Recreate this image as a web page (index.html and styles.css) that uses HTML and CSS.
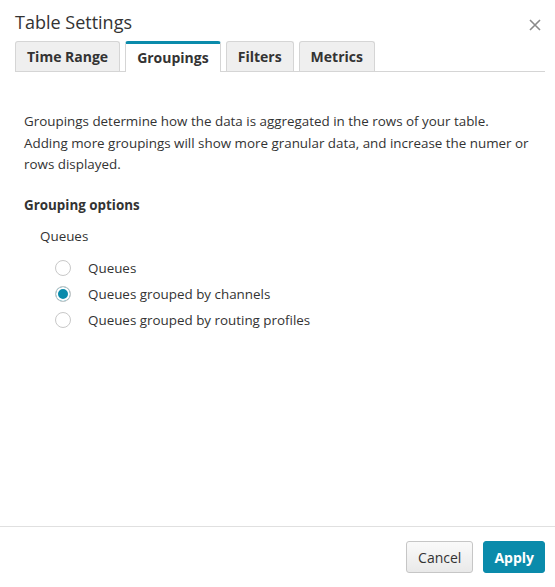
FILE: index.html
```html
<!DOCTYPE html>
<html>
<head>
<meta charset="utf-8">
<link rel="stylesheet" href="styles.css">
</head>
<body>
<div class="modal">
  <div class="header">
    <h1 class="title">Table Settings</h1>
    <button class="close" aria-label="Close">
      <svg width="12" height="12" viewBox="0 0 12 12"><path d="M1 1L11 11M11 1L1 11" stroke="#8a8a8a" stroke-width="1.6" fill="none"/></svg>
    </button>
  </div>
  <div class="tabs">
    <div class="tab">Time Range</div>
    <div class="tab active">Groupings</div>
    <div class="tab">Filters</div>
    <div class="tab">Metrics</div>
  </div>
  <div class="body">
    <p class="desc">Groupings determine how the data is aggregated in the rows of your table. Adding more groupings will show more granular data, and increase the numer or rows displayed.</p>
    <h2 class="section">Grouping options</h2>
    <div class="group-label">Queues</div>
    <div class="options">
      <label class="option"><span class="radio"></span>Queues</label>
      <label class="option"><span class="radio checked"></span>Queues grouped by channels</label>
      <label class="option"><span class="radio"></span>Queues grouped by routing profiles</label>
    </div>
  </div>
  <div class="footer">
    <button class="btn cancel">Cancel</button>
    <button class="btn apply">Apply</button>
  </div>
</div>
</body>
</html>
```

FILE: styles.css
```css
* { box-sizing: border-box; }
html, body { margin: 0; padding: 0; background: #fff; }
body {
  font-family: "Open Sans", "Noto Sans", sans-serif;
  color: #333;
  font-size: 13px;
}
.modal {
  width: 555px;
  height: 587px;
  display: flex;
  flex-direction: column;
}
.header {
  display: flex;
  justify-content: space-between;
  padding: 9px 14px 0 15px;
  height: 42px;
  align-items: flex-start;
}
.title {
  margin: 0;
  font-size: 18px;
  font-weight: 400;
  color: #333;
  line-height: 26px;
}
.close {
  border: none;
  background: none;
  padding: 0;
  margin-top: 10px;
  width: 12px;
  height: 12px;
  display: flex;
}
.tabs {
  display: flex;
  gap: 5px;
  margin: 0 10px 0 15px;
  border-bottom: 1px solid #d5d5d5;
  height: 30px;
  align-items: flex-end;
}
.tab {
  height: 30px;
  padding: 0 11px;
  background: #efefef;
  border: 1px solid #d5d5d5;
  border-bottom: none;
  border-radius: 3px 3px 0 0;
  font-weight: 700;
  font-size: 14px;
  line-height: 29px;
  color: #333;
}
.tab.active {
  background: #fff;
  border-top: 3px solid #0a8bab;
  line-height: 27px;
  height: 31px;
  margin-bottom: -1px;
}
.body {
  flex: 1;
  padding: 39px 20px 0 24px;
}
.desc {
  margin: 0;
  line-height: 21.5px;
  font-size: 13.4px;
}
.section {
  margin: 19px 0 0 0;
  font-size: 13.4px;
  font-weight: 700;
  line-height: 20px;
}
.group-label {
  margin: 11px 0 0 16px;
  line-height: 20px;
  font-size: 13.4px;
}
.options {
  margin: 9px 0 0 31px;
  display: flex;
  flex-direction: column;
}
.option {
  display: flex;
  align-items: center;
  height: 26px;
  font-size: 13.4px;
}
.radio {
  width: 16px;
  height: 16px;
  border: 1px solid #c8c8c8;
  border-radius: 50%;
  margin-right: 17px;
  background: #fff;
}
.radio.checked {
  background: #0a8bab;
  box-shadow: inset 0 0 0 2px #fff;
  border-color: #c8c8c8;
}
.footer {
  border-top: 1px solid #e0e0e0;
  height: 61px;
  display: flex;
  justify-content: flex-end;
  align-items: flex-start;
  gap: 10px;
  padding: 14px 10px 0 0;
}
.btn {
  height: 32px;
  font-family: inherit;
  font-size: 14px;
  border-radius: 3px;
  cursor: pointer;
}
.cancel {
  padding: 0 11px;
  background: linear-gradient(#fafafa, #e9e9e9);
  border: 1px solid #c6c6c6;
  color: #333;
}
.apply {
  padding: 0 10px;
  background: #0a8bab;
  border: 1px solid #0a8bab;
  color: #fff;
  font-weight: 700;
}
```
